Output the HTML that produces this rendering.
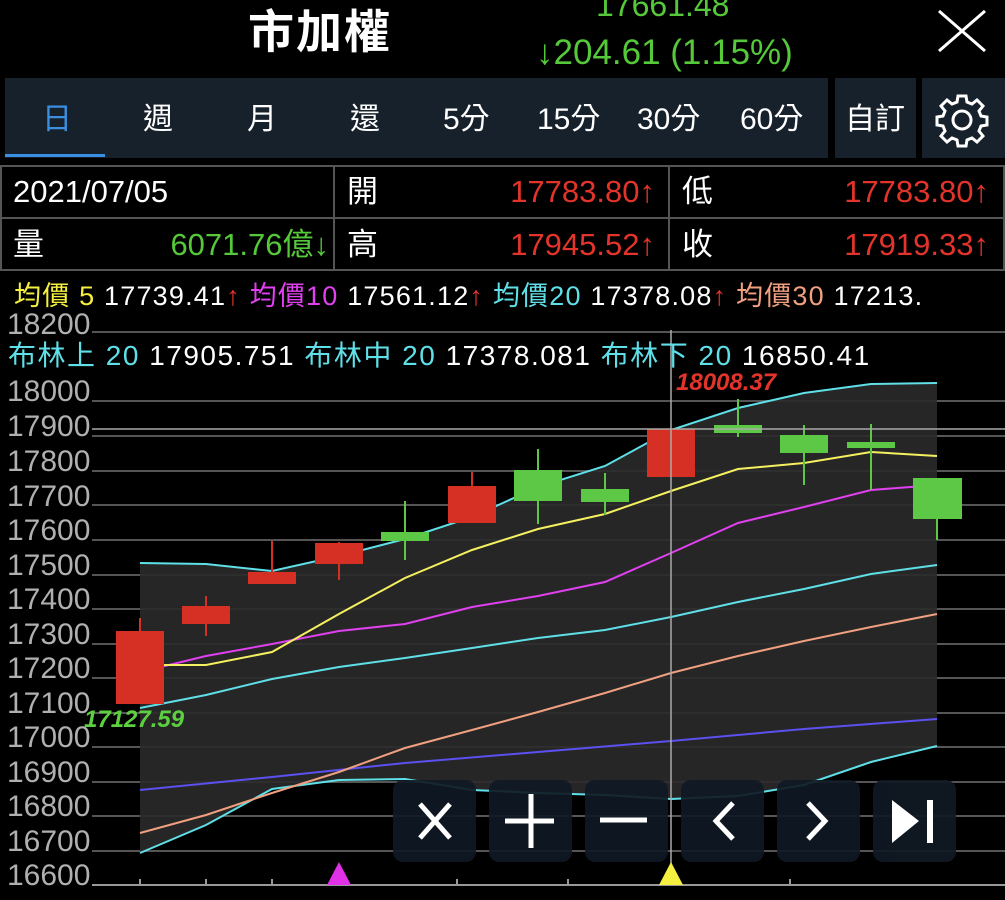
<!DOCTYPE html><html><head><meta charset="utf-8"><style>
body{margin:0;width:1005px;height:900px;background:#000;overflow:hidden;font-family:"Liberation Sans","Noto Sans CJK TC",sans-serif;position:relative;color:#fff}
.a{position:absolute;white-space:nowrap}
.tab{position:absolute;top:78px;height:80px;background:#17212b}
.t{position:absolute;top:100px;font-size:30px;line-height:40px;color:#fff}
.cell{position:absolute;border:2px solid #555;box-sizing:border-box;height:54px;background:#000}
.r{color:#e3342b}.g{color:#55c93a}
.v{font-size:31px;line-height:40px;top:172px}
</style></head><body>
<div class="a" style="left:248px;top:3px;font-size:46px;font-weight:bold;line-height:58px;letter-spacing:2px">市加權</div>
<div class="a g" style="left:596px;top:-15px;font-size:32px;line-height:40px">17661.48</div>
<div class="a g" style="left:536px;top:31px;font-size:35px;line-height:44px">↓204.61 (1.15%)</div>
<svg class="a" style="left:936px;top:8px" width="52" height="46"><path d="M3 3L49 43M49 3L3 43" stroke="#fff" stroke-width="3"/></svg>
<div class="tab" style="left:5px;width:823px"></div>
<div class="tab" style="left:835px;width:81px"></div>
<div class="tab" style="left:922px;width:83px"></div>
<div class="a" style="left:5px;top:154px;width:100px;height:3px;background:#3a8fe0"></div>
<div class="t" style="left:42px;color:#3a8fe0">日</div>
<div class="t" style="left:143px">週</div>
<div class="t" style="left:247px">月</div>
<div class="t" style="left:350px">還</div>
<div class="t" style="left:443px">5分</div>
<div class="t" style="left:537px">15分</div>
<div class="t" style="left:637px">30分</div>
<div class="t" style="left:740px">60分</div>
<div class="t" style="left:845px">自訂</div>
<svg class="a" style="left:934px;top:92px" width="56" height="56" viewBox="0 0 56 56"><g fill="none" stroke="#fff" stroke-width="3"><circle cx="28" cy="28" r="9"/><path d="M24 4h8l1 6 5 2 5-4 6 6-4 5 2 5 6 1v8l-6 1-2 5 4 5-6 6-5-4-5 2-1 6h-8l-1-6-5-2-5 4-6-6 4-5-2-5-6-1v-8l6-1 2-5-4-5 6-6 5 4 5-2z"/></g></svg>
<div class="cell" style="left:0;top:165px;width:335px"></div>
<div class="cell" style="left:333px;top:165px;width:337px"></div>
<div class="cell" style="left:668px;top:165px;width:337px"></div>
<div class="cell" style="left:0;top:217px;width:335px"></div>
<div class="cell" style="left:333px;top:217px;width:337px"></div>
<div class="cell" style="left:668px;top:217px;width:337px"></div>
<div class="a v" style="left:13px">2021/07/05</div>
<div class="a v" style="left:347px">開</div>
<div class="a r v" style="right:350px">17783.80↑</div>
<div class="a v" style="left:682px">低</div>
<div class="a r v" style="right:16px">17783.80↑</div>
<div class="a v" style="left:13px;top:225px">量</div>
<div class="a g v" style="right:676px;top:225px">6071.76億↓</div>
<div class="a v" style="left:347px;top:225px">高</div>
<div class="a r v" style="right:350px;top:225px">17945.52↑</div>
<div class="a v" style="left:682px;top:225px">收</div>
<div class="a r v" style="right:16px;top:225px">17919.33↑</div>
<svg class="a" style="left:0;top:0" width="1005" height="900">
<g stroke="#555" stroke-width="2">
<line x1="92" y1="332" x2="1005" y2="332"/><line x1="92" y1="401" x2="1005" y2="401"/><line x1="92" y1="436" x2="1005" y2="436"/><line x1="92" y1="471" x2="1005" y2="471"/><line x1="92" y1="505" x2="1005" y2="505"/><line x1="92" y1="540" x2="1005" y2="540"/><line x1="92" y1="575" x2="1005" y2="575"/><line x1="92" y1="609" x2="1005" y2="609"/><line x1="92" y1="644" x2="1005" y2="644"/><line x1="92" y1="678" x2="1005" y2="678"/><line x1="92" y1="713" x2="1005" y2="713"/><line x1="92" y1="747" x2="1005" y2="747"/><line x1="92" y1="782" x2="1005" y2="782"/><line x1="92" y1="816" x2="1005" y2="816"/><line x1="92" y1="851" x2="1005" y2="851"/></g>
<polygon fill="#2a2a2a" opacity="0.9" points="140,563 206,564 272,571 339,556 405,539 472,517 538,487 605,466 671,430 738,408 804,393 871,384 937,383 937,746 871,762 804,785 738,796 671,799 605,795 538,793 472,790 405,779 339,780 272,789 206,825 140,853"/>
<g fill="none" stroke-width="2">
<polyline stroke="#5fe0e8" points="140,563 206,564 272,571 339,556 405,539 472,517 538,487 605,466 671,430 738,408 804,393 871,384 937,383"/>
<polyline stroke="#5fe0e8" points="140,853 206,825 272,789 339,780 405,779 472,790 538,793 605,795 671,799 738,796 804,785 871,762 937,746"/>
<polyline stroke="#5b50f0" points="140,790 272,777 405,763 538,752 671,741 804,729 937,719"/>
<polyline stroke="#f0a080" points="140,833 206,815 272,793 339,772 405,748 472,730 538,712 605,693 671,673 738,656 804,641 871,627 937,614"/>
<polyline stroke="#5fe0e8" points="140,708 206,695 272,679 339,667 405,658 472,648 538,638 605,630 671,617 738,602 804,589 871,574 937,565"/>
<polyline stroke="#e040f0" points="140,672 206,656 272,644 339,631 405,624 472,607 538,596 605,582 671,553 738,523 804,507 871,490 937,485"/>
<polyline stroke="#f5f060" points="140,665 206,665 272,652 339,614 405,578 472,550 538,529 605,514 671,491 738,469 804,463 871,452 937,456"/>
</g>
<g stroke-width="2">
<g fill="#d63024" stroke="#d63024"><line x1="140" y1="618" x2="140" y2="703"/><rect x="117" y="632" width="46" height="71"/>
<line x1="206" y1="596" x2="206" y2="636"/><rect x="183" y="607" width="46" height="16"/>
<line x1="272" y1="541" x2="272" y2="583"/><rect x="249" y="573" width="46" height="10"/>
<line x1="339" y1="542" x2="339" y2="580"/><rect x="316" y="544" width="46" height="19"/>
<line x1="472" y1="472" x2="472" y2="522"/><rect x="449" y="487" width="46" height="35"/>
<rect x="648" y="430" width="46" height="46"/></g>
<g fill="#5cc845" stroke="#5cc845"><line x1="405" y1="501" x2="405" y2="560"/><rect x="382" y="533" width="46" height="7"/>
<line x1="538" y1="449" x2="538" y2="524"/><rect x="515" y="471" width="46" height="29"/>
<line x1="605" y1="473" x2="605" y2="515"/><rect x="582" y="490" width="46" height="11"/>
<line x1="738" y1="399" x2="738" y2="437"/><rect x="715" y="426" width="46" height="6"/>
<line x1="804" y1="425" x2="804" y2="485"/><rect x="781" y="436" width="46" height="16"/>
<line x1="871" y1="424" x2="871" y2="490"/><rect x="848" y="443" width="46" height="4"/>
<line x1="937" y1="479" x2="937" y2="540"/><rect x="914" y="479" width="47" height="39"/></g></g>
<line x1="671" y1="330" x2="671" y2="885" stroke="#aaa" stroke-width="1.5"/>
<line x1="92" y1="429" x2="1005" y2="429" stroke="#aaa" stroke-width="1.5"/>
<line x1="92" y1="885" x2="1005" y2="885" stroke="#999" stroke-width="2"/>
<g stroke="#999" stroke-width="2"><line x1="140" y1="879" x2="140" y2="885"/><line x1="206" y1="879" x2="206" y2="885"/><line x1="272" y1="879" x2="272" y2="885"/><line x1="457" y1="879" x2="457" y2="885"/><line x1="568" y1="879" x2="568" y2="885"/><line x1="679" y1="879" x2="679" y2="885"/><line x1="790" y1="879" x2="790" y2="885"/></g>
<polygon fill="#e030e8" points="339,862 327,885 351,885"/>
<polygon fill="#f5f040" points="671,862 659,885 683,885"/>
<g fill="#101a24" opacity="0.92"><rect x="393" y="780" width="83" height="82" rx="10"/><rect x="489" y="780" width="83" height="82" rx="10"/><rect x="585" y="780" width="83" height="82" rx="10"/><rect x="681" y="780" width="83" height="82" rx="10"/><rect x="777" y="780" width="83" height="82" rx="10"/><rect x="873" y="780" width="83" height="82" rx="10"/></g>
<g stroke="#fff" stroke-width="5" fill="none"><path d="M420 804L450 838M450 804L420 838"/><path d="M505 821H554M531 794V848"/><path d="M600 820H647"/><path d="M733 803L716 821L733 839"/><path d="M808 803L825 821L808 839"/></g>
<polygon fill="#fff" points="892,800 892,843 919,821"/><rect x="927" y="800" width="6" height="43" fill="#fff"/>
<g fill="#b0b0b0" font-size="30" font-family="Liberation Sans,sans-serif">
<text x="7" y="334">18200</text><text x="7" y="401">18000</text><text x="7" y="436">17900</text><text x="7" y="471">17800</text><text x="7" y="506">17700</text><text x="7" y="540">17600</text><text x="7" y="575">17500</text><text x="7" y="609">17400</text><text x="7" y="644">17300</text><text x="7" y="678">17200</text><text x="7" y="713">17100</text><text x="7" y="747">17000</text><text x="7" y="782">16900</text><text x="7" y="816">16800</text><text x="7" y="851">16700</text><text x="7" y="885">16600</text></g>
<text x="676" y="390" fill="#e3342b" font-size="24" font-style="italic" font-weight="bold" font-family="Liberation Sans,sans-serif">18008.37</text>
<text x="84" y="727" fill="#5cd040" font-size="24" font-style="italic" font-weight="bold" font-family="Liberation Sans,sans-serif">17127.59</text>
</svg>
<div class="a" style="left:14px;top:279px;font-size:27px;line-height:34px;letter-spacing:1.2px"><span style="color:#f5f040">均價 5</span> 17739.41<span class="r">↑</span> <span style="color:#e040f0">均價10</span> 17561.12<span class="r">↑</span> <span style="color:#5fe0e8">均價20</span> 17378.08<span class="r">↑</span> <span style="color:#f0a080">均價30</span> 17213.</div>
<div class="a" style="left:8px;top:339px;font-size:28px;line-height:34px;letter-spacing:1.5px"><span style="color:#5fe0e8">布林上 20</span> 17905.751 <span style="color:#5fe0e8">布林中 20</span> 17378.081 <span style="color:#5fe0e8">布林下 20</span> 16850.41</div>
</body></html>
